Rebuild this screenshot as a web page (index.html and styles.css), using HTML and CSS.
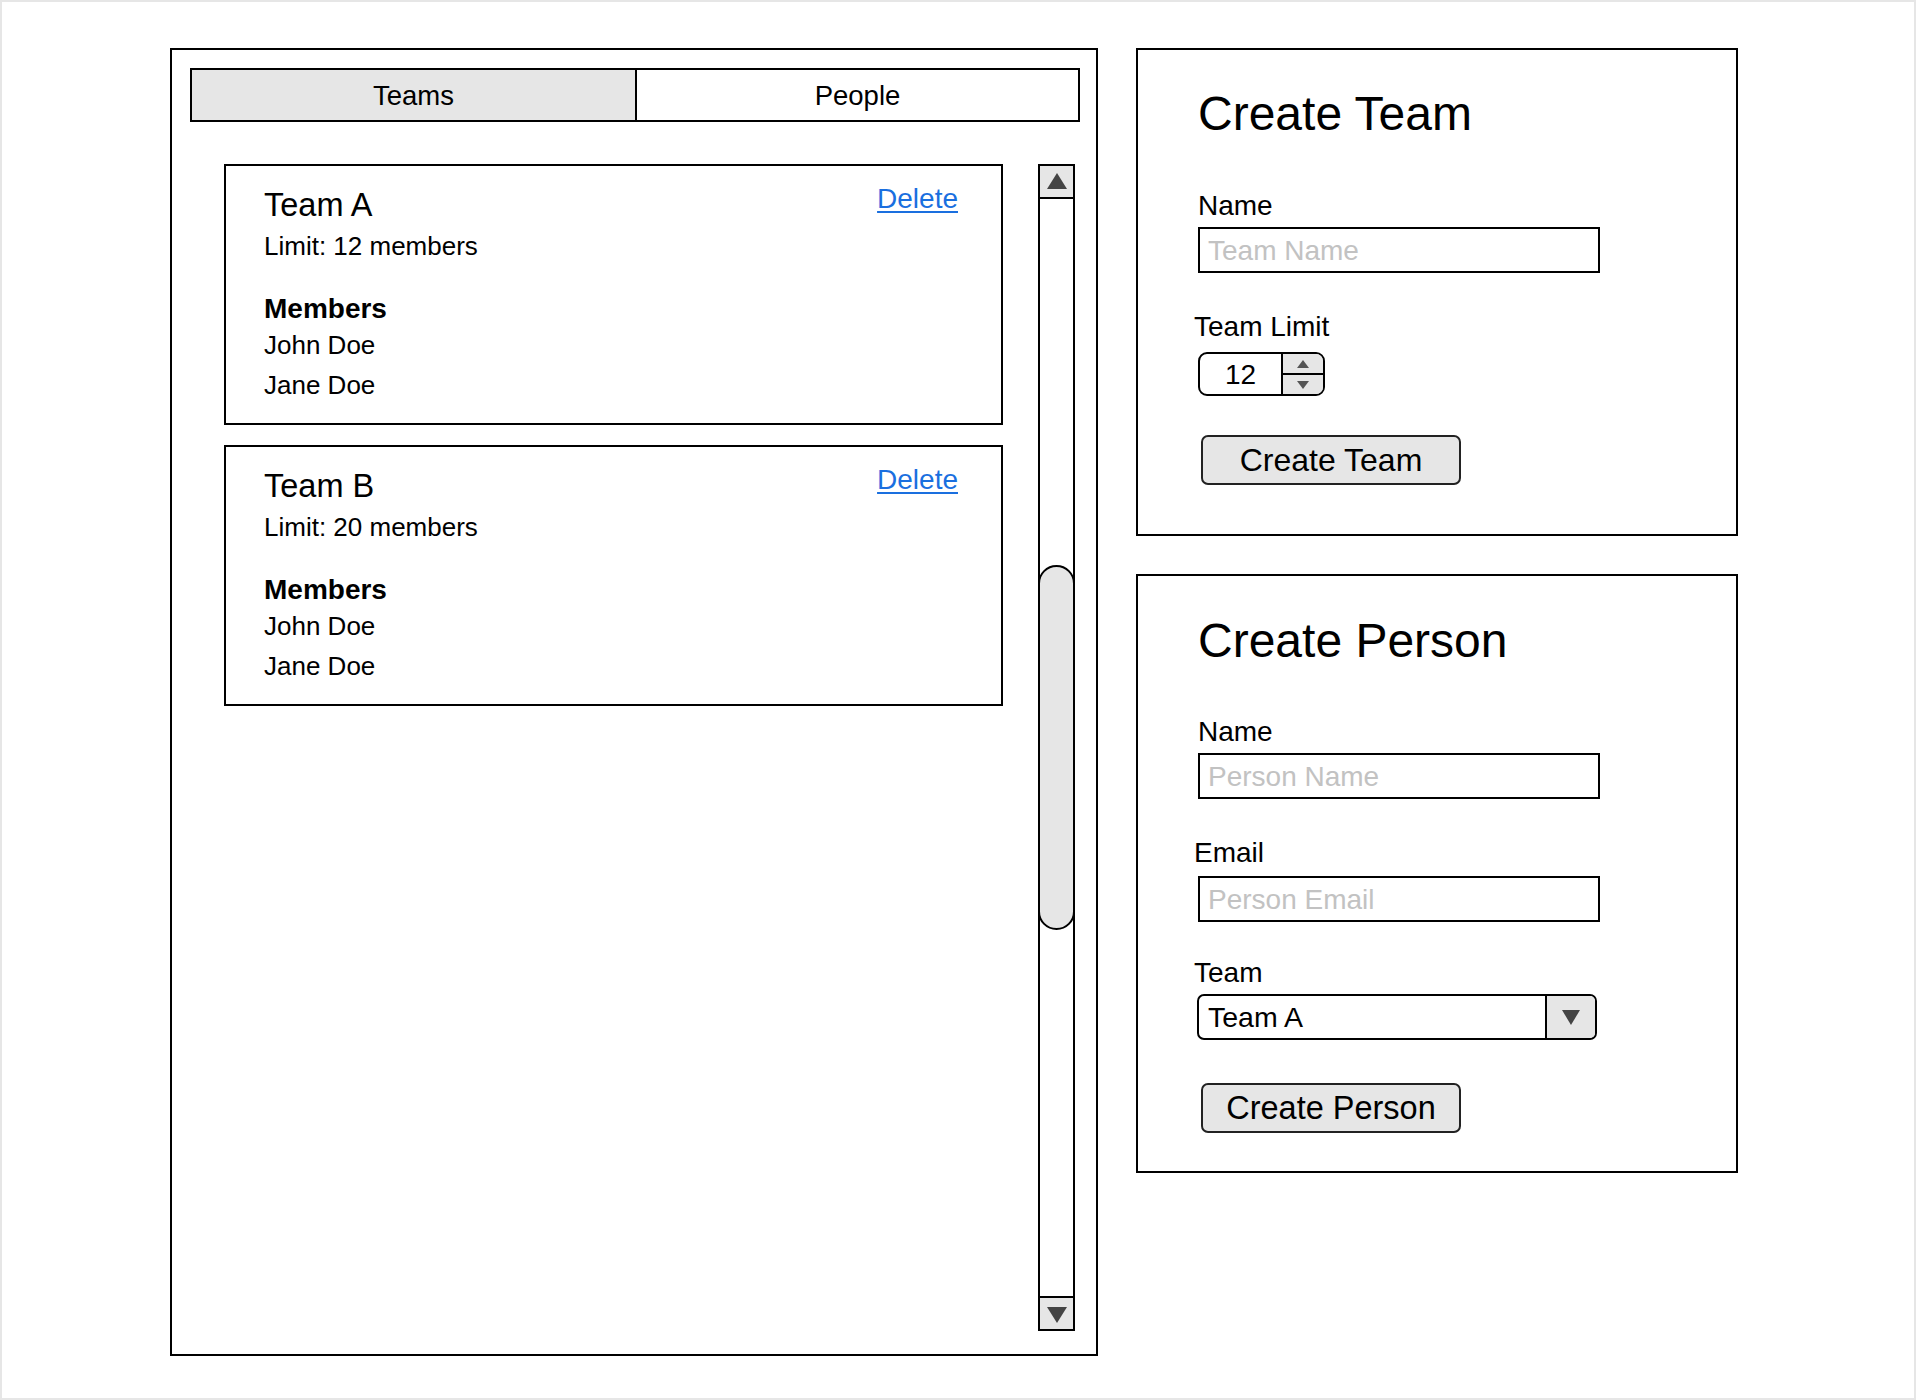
FILE: index.html
```html
<!DOCTYPE html>
<html lang="en">
<head>
<meta charset="utf-8">
<title>Teams</title>
<link rel="stylesheet" href="styles.css">
</head>
<body>
<div class="frame">
  <div class="layout">
    <section class="list-panel">
      <div class="tabs">
        <div class="tab tab-active">Teams</div>
        <div class="tab">People</div>
      </div>
      <div class="scroll-region">
        <div class="cards">
          <div class="card">
            <div class="card-head">
              <div class="card-title">Team A</div>
              <a class="delete" href="#">Delete</a>
            </div>
            <div class="card-limit">Limit: 12 members</div>
            <div class="card-members-title">Members</div>
            <div class="member">John Doe</div>
            <div class="member">Jane Doe</div>
          </div>
          <div class="card">
            <div class="card-head">
              <div class="card-title">Team B</div>
              <a class="delete" href="#">Delete</a>
            </div>
            <div class="card-limit">Limit: 20 members</div>
            <div class="card-members-title">Members</div>
            <div class="member">John Doe</div>
            <div class="member">Jane Doe</div>
          </div>
        </div>
        <div class="scrollbar">
          <div class="sb-btn sb-up"><span class="tri-up"></span></div>
          <div class="sb-track"><div class="sb-thumb"></div></div>
          <div class="sb-btn sb-down"><span class="tri-down"></span></div>
        </div>
      </div>
    </section>

    <div class="side">
      <section class="form-panel form-team">
        <h1 class="form-title">Create Team</h1>
        <div class="label label-first">Name</div>
        <div class="input input-gap-4"><span class="placeholder">Team Name</span></div>
        <div class="label label-shift">Team Limit</div>
        <div class="spinner">
          <div class="spinner-value">12</div>
          <div class="spinner-btns">
            <div class="spin-half"><span class="mini-up"></span></div>
            <div class="spin-half spin-bottom"><span class="mini-down"></span></div>
          </div>
        </div>
        <div class="button button-team">Create Team</div>
      </section>

      <section class="form-panel form-person">
        <h1 class="form-title">Create Person</h1>
        <div class="label label-first-p">Name</div>
        <div class="input input-gap-4"><span class="placeholder">Person Name</span></div>
        <div class="label label-shift">Email</div>
        <div class="input input-gap-7"><span class="placeholder">Person Email</span></div>
        <div class="label label-shift label-team">Team</div>
        <div class="select">
          <div class="select-value">Team A</div>
          <div class="select-btn"><span class="sel-tri"></span></div>
        </div>
        <div class="button button-person">Create Person</div>
      </section>
    </div>
  </div>
</div>
</body>
</html>
```

FILE: styles.css
```css
* { box-sizing: border-box; }

html, body {
  margin: 0;
  padding: 0;
  background: #fff;
}

body {
  font-family: "Liberation Sans", Arial, Helvetica, sans-serif;
  color: #000;
}

.frame {
  width: 1916px;
  height: 1400px;
  border: 2px solid #e6e6e6;
  padding: 46px 0 0 168px;
}

.layout {
  display: flex;
  align-items: flex-start;
  gap: 38px;
}

/* ---------- Left list panel ---------- */
.list-panel {
  width: 928px;
  height: 1308px;
  border: 2px solid #000;
  padding: 18px 16px 0 18px;
}

.tabs {
  display: grid;
  grid-template-columns: 1fr 1fr;
  height: 54px;
  border: 2px solid #000;
}

.tab {
  display: flex;
  align-items: center;
  justify-content: center;
  font-size: 27.5px;
  line-height: 30px;
  padding-top: 1px;
}

.tab + .tab { border-left: 2px solid #000; }

.tab-active { background: #e6e6e6; }

.scroll-region {
  display: flex;
  align-items: flex-start;
  margin-top: 42px;
  padding-left: 34px;
  height: 1167px;
}

.cards {
  width: 779px;
  display: flex;
  flex-direction: column;
  gap: 20px;
}

.card {
  border: 2px solid #000;
  padding: 22px 43px 18px 38px;
}

.card-head {
  display: flex;
  justify-content: space-between;
  align-items: flex-start;
}

.card-title {
  font-size: 32.5px;
  line-height: 34px;
}

.delete {
  font-size: 28px;
  line-height: 22px;
  color: #1a6fdf;
  text-decoration: underline;
  text-decoration-thickness: 2px;
  text-underline-offset: 3px;
}

.card-limit {
  font-size: 26px;
  line-height: 30px;
  margin-top: 9px;
}

.card-members-title {
  font-size: 28px;
  font-weight: bold;
  line-height: 32px;
  margin-top: 32px;
}

.member {
  font-size: 26px;
  line-height: 40px;
}

/* scrollbar */
.scrollbar {
  width: 37px;
  height: 1167px;
  margin-left: 35px;
  border: 2px solid #000;
  display: flex;
  flex-direction: column;
}

.sb-btn {
  height: 33px;
  background: #e6e6e6;
  display: flex;
  align-items: center;
  justify-content: center;
  flex: none;
}

.sb-up { border-bottom: 2px solid #000; }
.sb-down { border-top: 2px solid #000; }

.tri-up {
  width: 0; height: 0;
  border-left: 10px solid transparent;
  border-right: 10px solid transparent;
  border-bottom: 16px solid #444;
  margin-top: -2px;
}

.tri-down {
  width: 0; height: 0;
  border-left: 10px solid transparent;
  border-right: 10px solid transparent;
  border-top: 16px solid #444;
  margin-top: 2px;
}

.sb-track {
  flex: 1;
  padding-top: 366px;
}

.sb-thumb {
  height: 365px;
  margin: 0 -2px;
  border: 2px solid #000;
  border-radius: 19px;
  background: #e6e6e6;
}

/* ---------- Right forms ---------- */
.side {
  width: 602px;
  display: flex;
  flex-direction: column;
  gap: 38px;
}

.form-panel {
  border: 2px solid #000;
  padding: 37px 40px 49px 60px;
}

.form-person {
  padding-top: 37px;
  padding-bottom: 38px;
}

.form-title {
  margin: 0;
  font-weight: normal;
  font-size: 48px;
  line-height: 54px;
}

.form-person .form-title {
  font-size: 48px;
  padding-top: 1px;
}

.label {
  font-size: 28px;
  line-height: 32px;
}

.label-first { margin-top: 49px; }
.label-first-p { margin-top: 48px; }

.label-shift {
  margin-left: -4px;
  margin-top: 38px;
}

.label-team { margin-top: 35px; }

.input {
  width: 402px;
  height: 46px;
  border: 2px solid #000;
  display: flex;
  align-items: center;
  padding-left: 8px;
}

.input-gap-4 { margin-top: 5px; }
.input-gap-7 { margin-top: 7px; }

.placeholder {
  font-size: 28px;
  line-height: 31px;
  color: #c2c2c2;
}

.spinner {
  margin-top: 9px;
  width: 127px;
  height: 44px;
  border: 2px solid #000;
  border-radius: 9px;
  display: flex;
  overflow: hidden;
}

.spinner-value {
  width: 81px;
  display: flex;
  align-items: center;
  justify-content: center;
  font-size: 28px;
  line-height: 31px;
}

.spinner-btns {
  flex: 1;
  border-left: 2px solid #000;
  background: #e6e6e6;
  display: flex;
  flex-direction: column;
}

.spin-half {
  flex: 1;
  display: flex;
  align-items: center;
  justify-content: center;
}

.spin-bottom { border-top: 2px solid #000; }

.mini-up {
  width: 0; height: 0;
  border-left: 6px solid transparent;
  border-right: 6px solid transparent;
  border-bottom: 8px solid #555;
}

.mini-down {
  width: 0; height: 0;
  border-left: 6px solid transparent;
  border-right: 6px solid transparent;
  border-top: 8px solid #555;
}

.select {
  margin-top: 5px;
  margin-left: -1px;
  width: 400px;
  height: 46px;
  border: 2px solid #000;
  border-radius: 7px;
  display: flex;
  overflow: hidden;
}

.select-value {
  flex: 1;
  display: flex;
  align-items: center;
  padding-left: 9px;
  font-size: 28.5px;
  line-height: 31px;
}

.select-btn {
  width: 50px;
  border-left: 2px solid #000;
  background: #e6e6e6;
  display: flex;
  align-items: center;
  justify-content: center;
}

.sel-tri {
  width: 0; height: 0;
  border-left: 9px solid transparent;
  border-right: 9px solid transparent;
  border-top: 15px solid #444;
}

.button {
  width: 260px;
  height: 50px;
  margin-left: 3px;
  border: 2px solid #222;
  border-radius: 7px;
  background: #e6e6e6;
  display: flex;
  align-items: center;
  justify-content: center;
  font-size: 32px;
  line-height: 36px;
}

.button-team { margin-top: 39px; }
.button-person { margin-top: 43px; font-size: 32.5px; }
```
